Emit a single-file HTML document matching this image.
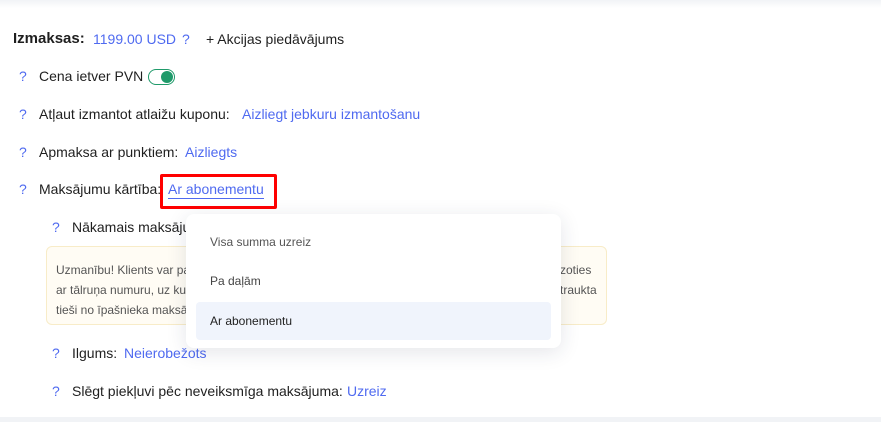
<!DOCTYPE html>
<html><head><meta charset="utf-8"><style>
body{margin:0;width:881px;height:422px;background:#fff;position:relative;overflow:hidden;font-family:"Liberation Sans",sans-serif;color:#1f1f1f;}
.a{position:absolute;white-space:nowrap;font-size:14px;line-height:16px;}
.b{color:#4f6af0;}
.q{color:#4f6af0;}
</style></head><body>
<div style="position:absolute;left:0;top:0;width:881px;height:8px;background:linear-gradient(#f1f3f6,#fff)"></div>
<div style="position:absolute;left:0;top:417px;width:881px;height:5px;background:#f1f3f6"></div>

<div class="a" style="left:13px;top:31px;font-weight:bold;font-size:15px">Izmaksas:</div>
<div class="a b" style="left:93px;top:31px">1199.00 USD</div>
<div class="a q" style="left:182px;top:31px">?</div>
<div class="a" style="left:206px;top:31px">+ Akcijas piedāvājums</div>

<div class="a q" style="left:19px;top:68px">?</div>
<div class="a" style="left:39px;top:68px">Cena ietver PVN</div>
<div style="position:absolute;left:148px;top:69px;width:25px;height:14px;border:1.5px solid #1f9a6a;border-radius:9px;"></div>
<div style="position:absolute;left:161px;top:71px;width:12px;height:12px;border-radius:50%;background:#1f9a6a"></div>

<div class="a q" style="left:19px;top:106px">?</div>
<div class="a" style="left:39px;top:106px">Atļaut izmantot atlaižu kuponu:</div>
<div class="a b" style="left:242px;top:106px">Aizliegt jebkuru izmantošanu</div>

<div class="a q" style="left:19px;top:144px">?</div>
<div class="a" style="left:39px;top:144px">Apmaksa ar punktiem:</div>
<div class="a b" style="left:185px;top:144px">Aizliegts</div>

<div class="a q" style="left:19px;top:181px">?</div>
<div class="a" style="left:39px;top:181px">Maksājumu kārtība:</div>
<div class="a b" style="left:168px;top:181px;border-bottom:1.5px solid #4f6af0;padding-bottom:1px">Ar abonementu</div>
<div style="position:absolute;left:160px;top:174px;width:111px;height:29px;border:3px solid #f00;border-radius:2px"></div>

<div class="a q" style="left:52px;top:219px">?</div>
<div class="a" style="left:72px;top:219px">Nākamais maksājums</div>

<div style="position:absolute;left:46px;top:246px;width:559px;height:77px;background:#fffcf4;border:1px solid #f8ecc8;border-radius:6px"></div>
<div class="a" style="left:56px;top:260px;font-size:12px;line-height:20px;color:#555">Uzmanību! Klients var pa<br>ar tālruņa numuru, uz ku<br>tieši no īpašnieka maksāj</div>
<div class="a" style="left:560px;top:260px;font-size:12px;line-height:20px;color:#555">zoties<br>traukta</div>

<div class="a q" style="left:52px;top:345px">?</div>
<div class="a" style="left:72px;top:345px">Ilgums:</div>
<div class="a b" style="left:124px;top:345px">Neierobežots</div>

<div class="a q" style="left:52px;top:383px">?</div>
<div class="a" style="left:72px;top:383px">Slēgt piekļuvi pēc neveiksmīga maksājuma:</div>
<div class="a b" style="left:347px;top:383px">Uzreiz</div>

<div style="position:absolute;left:186px;top:214px;width:375px;height:134px;background:#fff;border-radius:8px;box-shadow:0 4px 20px rgba(30,40,70,0.12)"></div>
<div class="a" style="left:210px;top:234px;font-size:12px;color:#555">Visa summa uzreiz</div>
<div class="a" style="left:210px;top:273px;font-size:12px;color:#444">Pa daļām</div>
<div style="position:absolute;left:196px;top:302px;width:355px;height:38px;background:#f0f4fc;border-radius:4px"></div>
<div class="a" style="left:210px;top:313px;font-size:12px;color:#222">Ar abonementu</div>
</body></html>
